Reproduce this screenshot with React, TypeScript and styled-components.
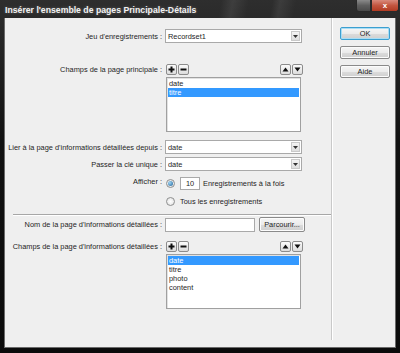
import styled, { createGlobalStyle } from "styled-components";

const GlobalStyle = createGlobalStyle`
  html, body {
    margin: 0;
    padding: 0;
    background: #1b1b1b;
  }
  body {
    font-family: "Liberation Sans", Arial, sans-serif;
    font-size: 7.4px;
    color: #1e1e1e;
  }
`;

const Window = styled.div`
  width: 400px;
  height: 353px;
  display: flex;
  flex-direction: column;
  background: linear-gradient(180deg, #2e2e2e 0%, #111 40%, #0b0b0b 100%);
  box-sizing: border-box;
  padding: 0 4px 5px 4px;
`;

const TitleBar = styled.div`
  height: 18px;
  display: flex;
  align-items: flex-start;
  justify-content: space-between;
  flex: none;
  background: linear-gradient(
    100deg,
    transparent 0%,
    transparent 55%,
    rgba(255, 255, 255, 0.08) 58%,
    transparent 62%,
    transparent 68%,
    rgba(255, 255, 255, 0.07) 70%,
    transparent 74%
  );
`;

const Title = styled.div`
  color: #f2f2f2;
  font-size: 8.7px;
  font-weight: bold;
  padding: 5px 0 0 1px;
  text-shadow: 0 0 3px rgba(255, 255, 255, 0.3);
`;

const Caption = styled.div`
  display: flex;
  margin-right: -3px;
`;

const CapButton = styled.div<{ $red?: boolean }>`
  height: 12px;
  width: ${(p) => (p.$red ? 28 : 15)}px;
  display: flex;
  align-items: center;
  justify-content: center;
  box-sizing: border-box;
  border: 1px solid #2a2a2a;
  border-top: none;
  color: #fff;
  font-size: 8px;
  font-weight: bold;
  background: ${(p) =>
    p.$red
      ? "linear-gradient(180deg, #d98a7c 0%, #c3553f 50%, #b13a22 100%)"
      : "linear-gradient(180deg, #8a8a8a 0%, #5e5e5e 50%, #4a4a4a 100%)"};
  border-radius: ${(p) => (p.$red ? "0 0 3px 0" : "0 0 0 3px")};
`;

const Body = styled.div`
  flex: 1;
  display: flex;
  background: #efefef;
  border: 1px solid #6a6a6a;
  border-top: none;
`;

const Main = styled.div`
  width: 326px;
  padding-top: 11px;
  display: flex;
  flex-direction: column;
  border-right: 1px solid #c9c9c9;
  box-shadow: 1px 0 0 #ffffff;
  margin-bottom: 7px;
`;

const Side = styled.div`
  flex: 1;
  display: flex;
  flex-direction: column;
  gap: 6px;
  padding: 9px 0 0 8px;
`;

const Row = styled.div<{ $top: number; $align?: string }>`
  display: flex;
  align-items: ${(p) => p.$align ?? "center"};
  margin-top: ${(p) => p.$top}px;
`;

const Label = styled.div`
  width: 157px;
  flex: none;
  text-align: right;
  white-space: nowrap;
  padding-right: 3px;
`;

const Select = styled.div`
  width: 137px;
  height: 14px;
  box-sizing: border-box;
  display: flex;
  align-items: center;
  justify-content: space-between;
  background: #fff;
  border: 1px solid #a9a9a9;
  padding: 0 1px 0 2px;
`;

const Arrow = styled.div`
  width: 9px;
  height: 10px;
  box-sizing: border-box;
  border: 1px solid #c9c9c9;
  background: linear-gradient(180deg, #f4f4f4, #dedede);
  display: flex;
  align-items: center;
  justify-content: center;
`;

const Tools = styled.div`
  width: 137px;
  display: flex;
  justify-content: space-between;
  align-items: center;
  padding-left: 1px;
`;

const Pair = styled.div`
  display: flex;
  gap: 1px;
`;

const SmallBtn = styled.div`
  width: 11px;
  height: 11px;
  box-sizing: border-box;
  border: 1px solid #8c8c8c;
  border-radius: 2px;
  background: linear-gradient(180deg, #fbfbfb, #dcdcdc);
  display: flex;
  align-items: center;
  justify-content: center;
`;

const ListBox = styled.div`
  margin-left: 161px;
  width: 135px;
  height: 55px;
  box-sizing: border-box;
  background: #fff;
  border: 1px solid #a0a0a0;
  box-shadow: inset 1px 1px 0 #e2e2e2;
  padding: 1px 1px;
  line-height: 9px;
`;

const Item = styled.div<{ $selected?: boolean }>`
  padding-left: 1px;
  height: 9px;
  background: ${(p) => (p.$selected ? "#3399ff" : "transparent")};
  color: ${(p) => (p.$selected ? "#fff" : "#1e1e1e")};
`;

const Options = styled.div`
  display: flex;
  flex-direction: column;
  gap: 7px;
  padding-left: 1px;
`;

const Option = styled.div`
  display: flex;
  align-items: center;
  gap: 5px;
`;

const Radio = styled.div<{ $checked?: boolean }>`
  width: 9px;
  height: 9px;
  flex: none;
  box-sizing: border-box;
  border-radius: 50%;
  border: 1px solid #8e8f8f;
  background: radial-gradient(circle, #ffffff 0%, #dedede 100%);
  display: flex;
  align-items: center;
  justify-content: center;
  &::after {
    content: "";
    display: ${(p) => (p.$checked ? "block" : "none")};
    width: 5px;
    height: 5px;
    border-radius: 50%;
    background: radial-gradient(circle at 35% 35%, #9fd6f5, #1d5f96);
  }
`;

const NumInput = styled.div`
  width: 20px;
  height: 13px;
  box-sizing: border-box;
  border: 1px solid #a9a9a9;
  background: #fff;
  display: flex;
  align-items: center;
  padding-left: 5px;
  margin-right: -2px;
`;

const Separator = styled.div`
  margin: 8px 0 0 8px;
  height: 1px;
  background: #a7a7a7;
  box-shadow: 0 1px 0 #ffffff;
`;

const TextInput = styled.div`
  width: 90px;
  height: 14px;
  box-sizing: border-box;
  border: 1px solid #a9a9a9;
  background: #fff;
`;

const PushButton = styled.div<{ $default?: boolean; $w?: number; $h?: number }>`
  width: ${(p) => p.$w ?? 50}px;
  height: ${(p) => p.$h ?? 13}px;
  box-sizing: border-box;
  border: 1px solid ${(p) => (p.$default ? "#3c9fd0" : "#8a8a8a")};
  border-radius: 2px;
  background: linear-gradient(180deg, #f6f6f6 0%, #ebebeb 50%, #dcdcdc 51%, #cfcfcf 100%);
  box-shadow: ${(p) => (p.$default ? "inset 0 0 0 1px #a8ddf5" : "inset 0 0 0 1px #fcfcfc")};
  display: flex;
  align-items: center;
  justify-content: center;
`;

const Caret = ({ up }: { up?: boolean }) => (
  <svg width="7" height="5" viewBox="0 0 7 5">
    <path d={up ? "M0.5 4.5 L3.5 0.5 L6.5 4.5 Z" : "M0.5 0.5 L3.5 4.5 L6.5 0.5 Z"} fill="#111" />
  </svg>
);

const Plus = () => (
  <svg width="7" height="7" viewBox="0 0 7 7">
    <path d="M3.5 0.5 V6.5 M0.5 3.5 H6.5" stroke="#111" strokeWidth="2" />
  </svg>
);

const Minus = () => (
  <svg width="7" height="7" viewBox="0 0 7 7">
    <path d="M0.5 3.5 H6.5" stroke="#111" strokeWidth="2" />
  </svg>
);

const DropArrow = () => (
  <svg width="5" height="3" viewBox="0 0 5 3">
    <path d="M0 0 L5 0 L2.5 3 Z" fill="#333" />
  </svg>
);

const FieldTools = () => (
  <Tools>
    <Pair>
      <SmallBtn>
        <Plus />
      </SmallBtn>
      <SmallBtn>
        <Minus />
      </SmallBtn>
    </Pair>
    <Pair>
      <SmallBtn>
        <Caret up />
      </SmallBtn>
      <SmallBtn>
        <Caret />
      </SmallBtn>
    </Pair>
  </Tools>
);

const Dropdown = ({ value }: { value: string }) => (
  <Select>
    <span>{value}</span>
    <Arrow>
      <DropArrow />
    </Arrow>
  </Select>
);

const App = () => {
  const mainFields = ["date", "titre"];
  const detailFields = ["date", "titre", "photo", "content"];

  return (
    <>
      <GlobalStyle />
      <Window>
        <TitleBar>
          <Title>Insérer l'ensemble de pages Principale-Détails</Title>
          <Caption>
            <CapButton />
            <CapButton $red>x</CapButton>
          </Caption>
        </TitleBar>
        <Body>
          <Main>
            <Row $top={0}>
              <Label>Jeu d'enregistrements :</Label>
              <Dropdown value="Recordset1" />
            </Row>

            <Row $top={21}>
              <Label>Champs de la page principale :</Label>
              <FieldTools />
            </Row>
            <ListBox style={{ marginTop: 2 }}>
              {mainFields.map((f) => (
                <Item key={f} $selected={f === "titre"}>
                  {f}
                </Item>
              ))}
            </ListBox>

            <Row $top={8}>
              <Label>Lier à la page d'informations détaillées depuis :</Label>
              <Dropdown value="date" />
            </Row>
            <Row $top={3}>
              <Label>Passer la clé unique :</Label>
              <Dropdown value="date" />
            </Row>

            <Row $top={6} $align="flex-start">
              <Label>Afficher :</Label>
              <Options>
                <Option>
                  <Radio $checked />
                  <NumInput>10</NumInput>
                  <span>Enregistrements à la fois</span>
                </Option>
                <Option>
                  <Radio />
                  <span>Tous les enregistrements</span>
                </Option>
              </Options>
            </Row>

            <Separator />

            <Row $top={2}>
              <Label>Nom de la page d'informations détaillées :</Label>
              <TextInput />
              <PushButton $w={46} $h={15} style={{ marginLeft: 4 }}>
                Parcourir...
              </PushButton>
            </Row>
            <Row $top={9}>
              <Label>Champs de la page d'informations détaillées :</Label>
              <FieldTools />
            </Row>
            <ListBox style={{ marginTop: 2 }}>
              {detailFields.map((f) => (
                <Item key={f} $selected={f === "date"}>
                  {f}
                </Item>
              ))}
            </ListBox>
          </Main>
          <Side>
            <PushButton $default>OK</PushButton>
            <PushButton>Annuler</PushButton>
            <PushButton>Aide</PushButton>
          </Side>
        </Body>
      </Window>
    </>
  );
};

export default App;
